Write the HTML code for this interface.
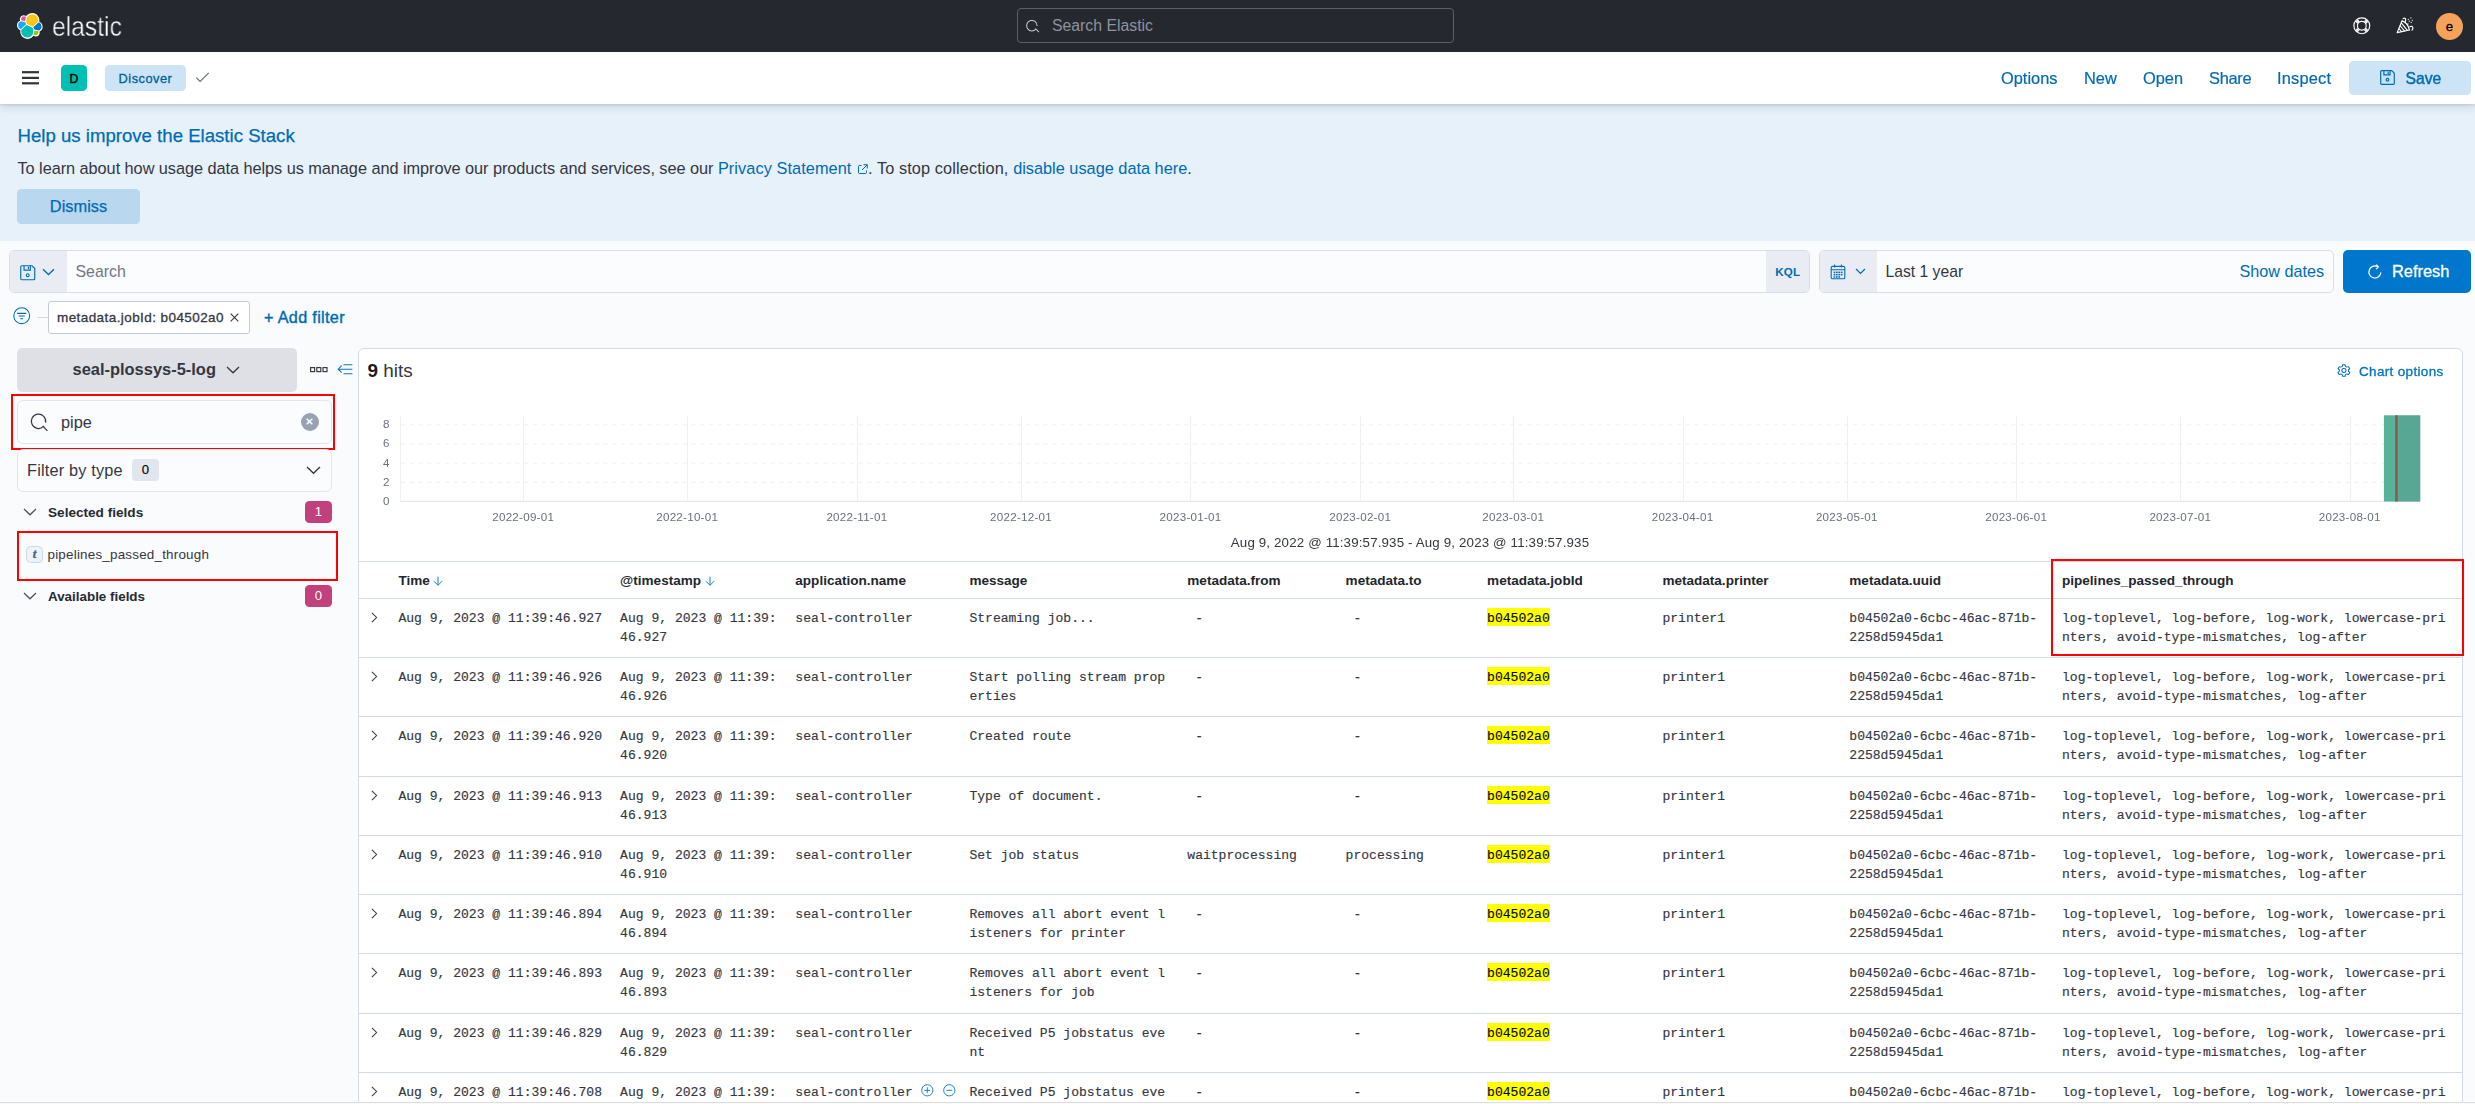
<!DOCTYPE html>
<html lang="en">
<head>
<meta charset="utf-8">
<title>Discover - Elastic</title>
<style>
*{box-sizing:border-box;margin:0;padding:0}
html,body{width:2475px;height:1104px;overflow:hidden;background:#fafbfd;font-family:"Liberation Sans",sans-serif;color:#343741}
.a{position:absolute;white-space:nowrap}
.mono{font-family:"Liberation Mono",monospace}
.blue{color:#006bb4}
svg{display:block;overflow:visible}
/* header */
#h1{left:0;top:0;width:2475px;height:52px;background:#25282f}
#h2{z-index:5;left:0;top:52px;width:2475px;height:52px;background:#fff;box-shadow:0 1px 2px rgba(70,80,100,.15),0 3px 9px rgba(80,95,120,.2)}
#banner{left:0;top:104px;width:2475px;height:137px;background:#e6f1fa}
.lnk{font-size:16.4px;color:#006bb4;top:17px;line-height:18px;-webkit-text-stroke:.2px #006bb4}
/* table */
.th{font-size:13.55px;font-weight:bold;color:#23262d;top:573px;line-height:16px}
.row{left:359px;width:2103px;height:60px;border-top:1px solid #d3dae6}
.c{position:absolute;top:10px;-webkit-text-stroke:.15px #343741;font-family:"Liberation Mono",monospace;font-size:13.05px;line-height:19px;color:#343741;white-space:pre}
.xl{width:100px;text-align:center;top:509px;font-size:11.6px;letter-spacing:.25px;line-height:16px;color:#69707d}
.yl{left:340px;width:49.5px;text-align:right;font-size:11.6px;line-height:16px;color:#69707d}
.hl{background:#ffff00;color:#000;padding:3px 0 0}
</style>
</head>
<body>
<!-- HEADER DARK -->
<div class="a" id="h1">
<svg class="a" style="left:16.8px;top:12.6px" width="25.6" height="25.6" viewBox="0 0 32 32">
<path fill="#FFF" d="M32 16.77a6.334 6.334 0 00-1.14-3.63 6.34 6.34 0 00-3.044-2.35 9.05 9.05 0 00.164-1.72 9.044 9.044 0 00-1.748-5.35A9.04 9.04 0 0021.62.42a9.046 9.046 0 00-5.624.1 9.04 9.04 0 00-4.5 3.37 4.89 4.89 0 00-5.96-.06 4.89 4.89 0 00-1.76 2.58 4.89 4.89 0 00.12 3.13 6.43 6.43 0 00-3.05 2.36A6.43 6.43 0 000 15.56a6.36 6.36 0 001.14 3.65 6.36 6.36 0 003.05 2.35 9.05 9.05 0 001.6 7.07 9.05 9.05 0 004.6 3.3 9.05 9.05 0 005.66-.05 9.05 9.05 0 004.53-3.39 4.85 4.85 0 002.98 1.03 4.88 4.88 0 003.96-2.03 4.88 4.88 0 00.63-4.4 6.43 6.43 0 003.05-2.36A6.43 6.43 0 0032 16.77"/>
<path fill="#FEC514" d="M12.58 13.787l7.002 3.211 7.066-6.213a7.85 7.85 0 00.152-1.557c0-4.287-3.472-7.76-7.76-7.76a7.76 7.76 0 00-6.43 3.4l-1.18 6.1 1.15 2.82z"/>
<path fill="#00BFB3" d="M5.333 21.215a7.93 7.93 0 00-.15 1.58 7.78 7.78 0 007.794 7.77 7.77 7.77 0 006.42-3.39l1.17-6.09-1.56-2.98-7.03-3.2-6.65 6.31z"/>
<path fill="#F04E98" d="M5.288 9.067l4.8 1.137 1.05-5.47a3.79 3.79 0 00-2.28-.77 3.8 3.8 0 00-3.57 5.1"/>
<path fill="#1BA9F5" d="M4.872 10.214A5.38 5.38 0 001.3 15.28a5.35 5.35 0 003.46 5.02l6.73-6.1-1.24-2.64-5.38-1.35z"/>
<path fill="#93C90E" d="M20.873 27.177a3.77 3.77 0 002.28.78 3.8 3.8 0 003.58-5.1l-4.8-1.12-1.06 5.44z"/>
<path fill="#07C" d="M21.848 20.563l5.28 1.24a5.38 5.38 0 003.58-5.07 5.36 5.36 0 00-3.47-5.02l-6.9 6.05 1.51 2.8z"/>
</svg>
<div class="a" id="wordmark" style="left:52.3px;top:10.6px;font-size:27.4px;line-height:32px;color:#fff;transform-origin:0 0;transform:scaleX(.9);will-change:transform;-webkit-text-stroke:.4px #25282f">elastic</div>
<div class="a" style="left:1017px;top:8px;width:437px;height:35px;border:1px solid #5b5f6a;border-radius:4px"></div>
<svg class="a" style="left:1025px;top:17.5px" width="15" height="15" viewBox="0 0 16 16"><path fill="none" stroke="#c5c9d0" stroke-width="1.1" d="M11.6 11.8A5.6 5.6 0 1 1 12.9 8.6M11.2 11.2l3.6 3.8"/></svg>
<div class="a" style="left:1052px;top:16px;font-size:15.8px;line-height:20px;color:#8e939e">Search Elastic</div>
<svg class="a" id="ic-help" style="left:2352.700px;top:16.700px" width="17.600" height="17.600" viewBox="0 0 18 18"><g fill="none" stroke="#fff"><circle cx="9" cy="9" r="8.100" stroke-width="1.2"/><circle cx="9" cy="9" r="4.500" stroke-width="1.2"/><path d="M3.600 3.600l2 2M14.400 3.600l-2 2M3.600 14.400l2-2M14.400 14.400l-2-2" stroke-width="3.400" opacity=".92"/></g></svg>
<svg class="a" id="ic-cheer" style="left:2396px;top:16px" width="18" height="18" viewBox="0 0 18 18"><g fill="none" stroke="#fff" stroke-width="1.15" stroke-linejoin="round" stroke-linecap="round"><path d="M6 4.900L1.200 16.600l12.200-2.600"/><path d="M6 4.900c3.400 1.100 6.400 4.700 7.400 9.100"/><path d="M4.100 9.600l4.400 5.400M2.900 12.500l2.700 3.200M5.300 6.900l6 7.500"/><path d="M7.100 2.600c1.200-.9 2.700-.2 2.600 1.200-.1.900-.7 1.500-.3 2.500"/><path d="M13.700 10.800c1.300-.9 3-.5 3.200 1 .1 1-.3 1.700-.9 2.300"/></g><g fill="#fff"><circle cx="14.900" cy="1.900" r=".6"/><circle cx="16.300" cy="4.300" r=".6"/><circle cx="15.200" cy="6.400" r=".6"/><circle cx="13.300" cy="5.200" r=".65"/><circle cx="12.300" cy="3.300" r=".65"/><circle cx="12" cy="7.900" r=".6"/></g></svg>
<div class="a" style="left:2436px;top:12.500px;width:27px;height:27px;border-radius:50%;background:#f5a35c;color:#000;font-size:13.200px;line-height:27.500px;text-align:center;-webkit-text-stroke:.3px #000">e</div>
</div>
<!-- HEADER WHITE -->
<div class="a" id="h2">
<svg class="a" style="left:22px;top:19px" width="17" height="14" viewBox="0 0 17 14"><g fill="#30333c"><rect x="0" y=".1" width="17" height="2.2"/><rect x="0" y="5.800" width="17" height="2.200"/><rect x="0" y="11.200" width="17" height="2.200"/></g></svg>
<div class="a" style="left:61px;top:13px;width:26px;height:26px;border-radius:4.5px;background:#00bfb3;color:#000;font-size:12.2px;-webkit-text-stroke:.45px #000;line-height:29.500px;text-align:center">D</div>
<div class="a" style="left:105px;top:13px;width:81px;height:26px;border-radius:4.5px;background:#cce4f5;color:#00609f;font-size:12.8px;letter-spacing:.5px;line-height:27.500px;text-align:center;-webkit-text-stroke:.3px #00609f">Discover</div>
<svg class="a" style="left:195px;top:19px" width="15" height="13" viewBox="0 0 15 13"><path fill="none" stroke="#69707d" stroke-width="1.2" d="M1.2 6.6l3.9 3.9L13.8 1.8"/></svg>
<div class="a lnk" style="left:2001px">Options</div>
<div class="a lnk" style="left:2084px">New</div>
<div class="a lnk" style="left:2143px">Open</div>
<div class="a lnk" style="left:2209px;letter-spacing:-.3px">Share</div>
<div class="a lnk" style="left:2277px;letter-spacing:.2px">Inspect</div>
<div class="a" style="left:2349px;top:9px;width:122px;height:34px;border-radius:4.5px;background:#cce4f5"></div>
<svg class="a" id="ic-save" style="left:2379px;top:17px" width="17" height="17" viewBox="0 0 16 16"><g fill="none" stroke="#006bb4" stroke-width="1.1"><path d="M1.6 2.6a1 1 0 011-1h9.3l2.5 2.5v9.3a1 1 0 01-1 1H2.6a1 1 0 01-1-1z"/><path d="M4.6 1.6v4h5.8v-4M8.6 2.6v2"/><circle cx="8" cy="10.2" r="1.3"/></g></svg>
<div class="a lnk" style="left:2405.400px;top:18px;font-size:15.800px;-webkit-text-stroke:.4px #006bb4">Save</div>
</div>
<!-- BANNER -->
<div class="a" id="banner">
<div class="a" style="left:17.5px;top:21px;font-size:18.63px;line-height:22px;color:#006bb4;-webkit-text-stroke:.25px #006bb4">Help us improve the Elastic Stack</div>
<div class="a" style="left:17.5px;top:54px;font-size:16.32px;line-height:20px;color:#343741"><span style="letter-spacing:-.055px">To learn about how usage data helps us manage and improve our products and services, see our </span><span class="blue" style="letter-spacing:.07px">Privacy Statement</span><svg style="display:inline-block;vertical-align:-1px;margin:0 0 0 5.500px" width="11" height="11" viewBox="0 0 11 11"><path fill="none" stroke="#006bb4" stroke-width="1" d="M4.5 1.5h-2a1 1 0 00-1 1v6a1 1 0 001 1h6a1 1 0 001-1v-2M6.5 .7h3.8v3.8M10.2 .8L5 6"/></svg><span style="letter-spacing:.1px">. To stop collection, </span><span class="blue">disable usage data here</span>.</div>
<div class="a" style="left:17px;top:85px;width:123px;height:35px;border-radius:4.5px;background:#b9d8f0;color:#006bb4;font-size:16.4px;line-height:35px;text-align:center;-webkit-text-stroke:.25px #006bb4">Dismiss</div>
</div>
<!-- QUERY BAR -->
<div class="a" id="qb" style="left:9px;top:250px;width:1801px;height:43px;border:1px solid #d9dde6;border-radius:5px;background:#fbfcfd;overflow:hidden">
<div class="a" style="left:0;top:0;width:57px;height:41px;background:#e9edf3"></div>
<svg class="a" style="left:9.300px;top:12.600px" width="17.500" height="17.500" viewBox="0 0 16 16"><g fill="none" stroke="#006bb4" stroke-width="1.05"><path d="M1.6 2.6a1 1 0 011-1h9.3l2.5 2.5v9.3a1 1 0 01-1 1H2.6a1 1 0 01-1-1z"/><path d="M4.6 1.6v4h5.8v-4M8.6 2.6v2"/><circle cx="8" cy="10.2" r="1.3"/></g></svg>
<svg class="a" style="left:32px;top:17px" width="13" height="8" viewBox="0 0 13 8"><path fill="none" stroke="#006bb4" stroke-width="1.3" d="M1 1.2l5.5 5.3L12 1.2"/></svg>
<div class="a" style="left:65.500px;top:11px;font-size:15.900px;line-height:20px;color:#717885">Search</div>
<div class="a" style="left:1756px;top:0;width:45px;height:41px;background:#e9edf3;color:#006bb4;font-size:11.6px;font-weight:bold;line-height:42px;text-align:center;letter-spacing:.2px;text-indent:-1.5px">KQL</div>
</div>
<div class="a" id="dp" style="left:1819px;top:250px;width:515px;height:43px;border:1px solid #d9dde6;border-radius:5px;background:#fbfcfd;overflow:hidden">
<div class="a" style="left:0;top:0;width:57px;height:41px;background:#e9edf3"></div>
<svg class="a" style="left:10px;top:12.5px" width="16" height="16" viewBox="0 0 16 16"><g fill="none" stroke="#006bb4" stroke-width="1.1"><rect x="1.2" y="2.4" width="13.6" height="12.4" rx="1.4"/><path d="M1.2 5.8h13.6M4.6 .6v3M11.4 .6v3"/></g><g fill="#006bb4"><rect x="3.6" y="7.6" width="1.7" height="1.5"/><rect x="6" y="7.6" width="1.7" height="1.5"/><rect x="8.4" y="7.6" width="1.7" height="1.5"/><rect x="10.8" y="7.6" width="1.7" height="1.5"/><rect x="3.6" y="9.9" width="1.7" height="1.5"/><rect x="6" y="9.9" width="1.7" height="1.5"/><rect x="8.4" y="9.9" width="1.7" height="1.5"/><rect x="10.8" y="9.9" width="1.7" height="1.5"/><rect x="3.6" y="12.2" width="1.7" height="1.5"/><rect x="6" y="12.2" width="1.7" height="1.5"/><rect x="8.4" y="12.2" width="1.7" height="1.5"/></g></svg>
<svg class="a" style="left:35px;top:17px" width="11" height="7" viewBox="0 0 11 7"><path fill="none" stroke="#006bb4" stroke-width="1.2" d="M1 1l4.5 4.5L10 1"/></svg>
<div class="a" style="left:65.5px;top:11px;font-size:15.7px;line-height:20px;color:#343741">Last 1 year</div>
<div class="a" style="right:9px;top:10px;font-size:16.2px;line-height:20px;color:#006bb4">Show dates</div>
</div>
<div class="a" id="refresh" style="left:2343px;top:250px;width:128px;height:43px;border-radius:5px;background:#0077cc"></div>
<svg class="a" style="left:2367px;top:263.5px" width="16" height="16" viewBox="0 0 16 16"><path fill="none" stroke="#fff" stroke-width="1.2" d="M13.9 8.4A6 6 0 1 1 10.6 2.6M9.2 .8l2.2 2-2.2 2.4"/></svg>
<div class="a" style="left:2392px;top:261px;font-size:16.4px;line-height:20px;color:#fff;-webkit-text-stroke:.3px #fff">Refresh</div>
<!-- FILTER ROW -->
<svg class="a" id="ic-filter" style="left:12.700px;top:306.700px" width="17.400" height="17.400" viewBox="0 0 18 18"><g fill="none" stroke="#006bb4" stroke-width="1.1"><circle cx="9" cy="9" r="8.2"/><path d="M4.2 6.6h9.6M5.8 9.4h6.4M7.6 12.2h2.8"/></g></svg>
<div class="a" style="left:37px;top:317px;width:12px;height:1px;background:#d3dae6"></div>
<div class="a" style="left:48px;top:301px;width:201.5px;height:33px;border:1px solid #c5cbd6;border-radius:3px;background:#fff"></div>
<div class="a" style="left:57px;top:309px;font-size:13.5px;letter-spacing:.42px;line-height:17px;color:#343741;-webkit-text-stroke:.3px #343741">metadata.jobId: b04502a0</div>
<svg class="a" style="left:230px;top:313px" width="9" height="9" viewBox="0 0 9 9"><path fill="none" stroke="#343741" stroke-width="1.1" d="M.7.7l7.6 7.6M8.3.7L.7 8.3"/></svg>
<div class="a" style="left:264px;top:307px;font-size:16.2px;letter-spacing:.33px;line-height:20px;color:#006bb4;-webkit-text-stroke:.4px #006bb4">+ Add filter</div>

<!-- SIDEBAR -->
<div class="a" style="left:17px;top:348px;width:280px;height:43.5px;border-radius:5px;background:#dee0e5"></div>
<div class="a" style="left:72.5px;top:359px;font-size:16.45px;font-weight:bold;line-height:20px;color:#343741">seal-plossys-5-log</div>
<svg class="a" style="left:226px;top:365.5px" width="14" height="8" viewBox="0 0 14 8"><path fill="none" stroke="#343741" stroke-width="1.3" d="M1 1l6 5.8L13 1"/></svg>
<svg class="a" style="left:309.900px;top:367.100px" width="18" height="6" viewBox="0 0 18 6"><g fill="none" stroke="#343741" stroke-width="1.15"><rect x=".6" y=".6" width="4" height="4"/><rect x="6.800" y=".6" width="4" height="4"/><rect x="13" y=".6" width="4" height="4"/></g></svg>
<svg class="a" style="left:336.800px;top:363.800px" width="16" height="11" viewBox="0 0 16 11"><path fill="none" stroke="#0a74c2" stroke-width="1.05" d="M6.500 .7h8.900M1.200 5.200h14.200M6.500 9.700h8.900M4.700 1.700L1.200 5.200l3.500 3.500"/></svg>
<div class="a" style="left:17px;top:400px;width:315px;height:44px;border:1px solid #e1e5ee;border-radius:6px;background:#fbfcfd"></div>
<svg class="a" style="left:30px;top:413px" width="19" height="19" viewBox="0 0 19 19"><path fill="none" stroke="#343741" stroke-width="1.2" d="M13.4 13.6A7.2 7.2 0 1 1 15.6 9.6M12.8 12.8l4.6 5"/></svg>
<div class="a" style="left:61px;top:412px;font-size:16.3px;line-height:20px;color:#343741">pipe</div>
<div class="a" style="left:300.5px;top:412.5px;width:18.5px;height:18.5px;border-radius:50%;background:#98a2b3"></div>
<svg class="a" style="left:306.2px;top:418.2px" width="7" height="7" viewBox="0 0 7 7"><path fill="none" stroke="#fff" stroke-width="1.5" d="M.7.7l5.6 5.6M6.3.7L.7 6.3"/></svg>
<div class="a" style="left:11px;top:394px;width:324px;height:56px;border:2px solid #ff0000"></div>
<div class="a" style="left:17px;top:449px;width:315px;height:42.5px;border:1px solid #e1e5ee;border-radius:6px;background:#fbfcfd"></div>
<div class="a" style="left:27px;top:460px;font-size:16.3px;letter-spacing:.18px;line-height:20px;color:#343741">Filter by type</div>
<div class="a" style="left:132px;top:459px;width:27px;height:22px;border-radius:4px;background:#e0e5ee;color:#000;font-size:13.2px;line-height:22px;text-align:center;-webkit-text-stroke:.12px #000">0</div>
<svg class="a" style="left:306px;top:465.5px" width="15" height="9" viewBox="0 0 15 9"><path fill="none" stroke="#343741" stroke-width="1.3" d="M1 1l6.5 6.3L14 1"/></svg>
<svg class="a" style="left:23.300px;top:508px" width="14" height="8" viewBox="0 0 14 8"><path fill="none" stroke="#4a4f59" stroke-width="1.2" d="M1 1l6 5.8L13 1"/></svg>
<div class="a" style="left:48px;top:503.5px;font-size:13.6px;font-weight:bold;line-height:17px;color:#272a31">Selected fields</div>
<div class="a" style="left:305px;top:501px;width:27px;height:22px;border-radius:4.5px;background:#c2407b;color:#fff;font-size:13.2px;line-height:21.5px;text-align:center">1</div>
<div class="a" style="left:26px;top:546px;width:17px;height:17px;border:1px solid #c9d9ea;border-radius:4.5px;background:#eef3f9"></div>
<div class="a" style="left:26px;top:546px;width:17px;height:17px;font-family:'Liberation Serif',serif;font-style:italic;font-weight:bold;font-size:13px;line-height:16px;text-align:center;color:#42668d;-webkit-text-stroke:.3px #42668d">t</div>
<div class="a" style="left:47.5px;top:546px;font-size:13.4px;line-height:17px;color:#343741;letter-spacing:.22px">pipelines_passed_through</div>
<div class="a" style="left:17px;top:531px;width:321px;height:50px;border:2px solid #ff0000"></div>
<svg class="a" style="left:23.300px;top:592px" width="14" height="8" viewBox="0 0 14 8"><path fill="none" stroke="#4a4f59" stroke-width="1.2" d="M1 1l6 5.8L13 1"/></svg>
<div class="a" style="left:48px;top:587.5px;font-size:13.4px;font-weight:bold;line-height:17px;color:#272a31">Available fields</div>
<div class="a" style="left:305px;top:585px;width:27px;height:22px;border-radius:4.5px;background:#c2407b;color:#fff;font-size:13.2px;line-height:21.5px;text-align:center">0</div>
<!-- MAIN PANEL -->
<div class="a" id="panel" style="left:358px;top:348px;width:2105px;height:770px;border:1px solid #d3dae6;border-radius:6px;background:#fff"></div>
<div class="a" style="left:367.5px;top:359px;font-size:18.9px;line-height:23px;color:#343741"><b style="color:#1a1c21">9</b> hits</div>
<!--CHART-->
<svg class="a" id="chart" style="left:0;top:0" width="2475" height="560" viewBox="0 0 2475 560"><g stroke="#eef0f4" stroke-width="1" fill="none"><path d="M400.5 416V501"/><path d="M523.5 416V501"/><path d="M687.5 416V501"/><path d="M857.5 416V501"/><path d="M1021.5 416V501"/><path d="M1190.5 416V501"/><path d="M1360.5 416V501"/><path d="M1513.5 416V501"/><path d="M1683.5 416V501"/><path d="M1847.5 416V501"/><path d="M2016.5 416V501"/><path d="M2180.5 416V501"/><path d="M2350.5 416V501"/></g><g stroke="#eeeff4" stroke-width="1.1" stroke-dasharray="4.1 4.7" fill="none"><path d="M401 424.8H2420"/><path d="M401 444.0H2420"/><path d="M401 463.2H2420"/><path d="M401 482.4H2420"/></g><path d="M400 501.4H2420" stroke="#e4e7ee" stroke-width="1.2" fill="none"/><rect x="2383.9" y="415.3" width="36.4" height="86.2" fill="#54b399"/><rect x="2396.4" y="415.3" width="23.9" height="86.2" fill="#6a7a86" opacity=".22"/><rect x="2395.1" y="415.3" width="2.6" height="86.2" fill="#8e5a4e"/></svg>
<div class="a xl" style="left:473.2px">2022-09-01</div>
<div class="a xl" style="left:637.2px">2022-10-01</div>
<div class="a xl" style="left:806.9px">2022-11-01</div>
<div class="a xl" style="left:971.0px">2022-12-01</div>
<div class="a xl" style="left:1140.5px">2023-01-01</div>
<div class="a xl" style="left:1310.2px">2023-02-01</div>
<div class="a xl" style="left:1463.2px">2023-03-01</div>
<div class="a xl" style="left:1632.6px">2023-04-01</div>
<div class="a xl" style="left:1796.8px">2023-05-01</div>
<div class="a xl" style="left:1966.2px">2023-06-01</div>
<div class="a xl" style="left:2130.3px">2023-07-01</div>
<div class="a xl" style="left:2299.7px">2023-08-01</div>
<div class="a yl" style="top:416.3px">8</div>
<div class="a yl" style="top:435.0px">6</div>
<div class="a yl" style="top:454.7px">4</div>
<div class="a yl" style="top:473.9px">2</div>
<div class="a yl" style="top:493.1px">0</div>
<div class="a" style="left:1110px;width:600px;text-align:center;top:534px;font-size:13.3px;letter-spacing:.16px;line-height:17px;color:#343741">Aug 9, 2022 @ 11:39:57.935 - Aug 9, 2023 @ 11:39:57.935</div>
<svg class="a" style="left:2336.700px;top:363.900px" width="13.800" height="13.100" viewBox="0 0 14 14" preserveAspectRatio="none"><g fill="none" stroke="#0071c2" stroke-width="1.05" stroke-linejoin="round"><path d="M5.34 2.60L5.75 0.83L8.25 0.83L8.66 2.60L9.98 3.37L11.72 2.83L12.97 5.00L11.64 6.23L11.64 7.77L12.97 9.00L11.72 11.17L9.98 10.63L8.66 11.40L8.25 13.17L5.75 13.17L5.34 11.40L4.02 10.63L2.28 11.17L1.03 9.00L2.36 7.77L2.36 6.23L1.03 5.00L2.28 2.83L4.02 3.37Z"/><circle cx="7" cy="7" r="2.1"/></g></svg>
<div class="a" style="left:2359px;top:362.5px;font-size:13.5px;letter-spacing:.33px;line-height:17px;color:#0071c2;-webkit-text-stroke:.3px #0071c2">Chart options</div>
<!--/CHART-->
<!--TABLE-->
<div class="a" style="left:359px;top:561px;width:2103px;height:1px;background:#d3dae6"></div>
<div class="a th" style="left:398.4px">Time<svg style="display:inline-block;vertical-align:-1.300px;margin-left:3.500px" width="10" height="10" viewBox="0 0 10 10"><path fill="none" stroke="#1a80cc" stroke-width="1" d="M5 .6v8.600M.9 5.200l4.100 4.100 4.100-4.100"/></svg></div>
<div class="a th" style="left:620.1px">@timestamp<svg style="display:inline-block;vertical-align:-1.300px;margin-left:3.500px" width="10" height="10" viewBox="0 0 10 10"><path fill="none" stroke="#1a80cc" stroke-width="1" d="M5 .6v8.600M.9 5.200l4.100 4.100 4.100-4.100"/></svg></div>
<div class="a th" style="left:795.3px">application.name</div>
<div class="a th" style="left:969.4px">message</div>
<div class="a th" style="left:1187.3px">metadata.from</div>
<div class="a th" style="left:1345.6px">metadata.to</div>
<div class="a th" style="left:1487.1px">metadata.jobId</div>
<div class="a th" style="left:1662.4px">metadata.printer</div>
<div class="a th" style="left:1849.3px">metadata.uuid</div>
<div class="a th" style="left:2062.0px">pipelines_passed_through</div>
<div class="a row" style="top:598.0px"><svg class="a" style="left:12.3px;top:13.3px" width="7" height="11" viewBox="0 0 7 11"><path fill="none" stroke="#343741" stroke-width="1.05" d="M.9 .8l4.700 4.700-4.700 4.700"/></svg><div class="c" style="left:39.4px">Aug 9, 2023 @ 11:39:46.927</div><div class="c" style="left:261.1px">Aug 9, 2023 @ 11:39:
46.927</div><div class="c" style="left:436.3px">seal-controller</div><div class="c" style="left:610.4px">Streaming job...</div><div class="c" style="left:828.3px"> - </div><div class="c" style="left:986.6px"> - </div><div class="c" style="left:1128.1px"><span class="hl">b04502a0</span></div><div class="c" style="left:1303.4px">printer1</div><div class="c" style="left:1490.3px">b04502a0-6cbc-46ac-871b-
2258d5945da1</div><div class="c" style="left:1703.0px">log-toplevel, log-before, log-work, lowercase-pri
nters, avoid-type-mismatches, log-after</div></div>
<div class="a row" style="top:657.0px"><svg class="a" style="left:12.3px;top:13.3px" width="7" height="11" viewBox="0 0 7 11"><path fill="none" stroke="#343741" stroke-width="1.05" d="M.9 .8l4.700 4.700-4.700 4.700"/></svg><div class="c" style="left:39.4px">Aug 9, 2023 @ 11:39:46.926</div><div class="c" style="left:261.1px">Aug 9, 2023 @ 11:39:
46.926</div><div class="c" style="left:436.3px">seal-controller</div><div class="c" style="left:610.4px">Start polling stream prop
erties</div><div class="c" style="left:828.3px"> - </div><div class="c" style="left:986.6px"> - </div><div class="c" style="left:1128.1px"><span class="hl">b04502a0</span></div><div class="c" style="left:1303.4px">printer1</div><div class="c" style="left:1490.3px">b04502a0-6cbc-46ac-871b-
2258d5945da1</div><div class="c" style="left:1703.0px">log-toplevel, log-before, log-work, lowercase-pri
nters, avoid-type-mismatches, log-after</div></div>
<div class="a row" style="top:716.0px"><svg class="a" style="left:12.3px;top:13.3px" width="7" height="11" viewBox="0 0 7 11"><path fill="none" stroke="#343741" stroke-width="1.05" d="M.9 .8l4.700 4.700-4.700 4.700"/></svg><div class="c" style="left:39.4px">Aug 9, 2023 @ 11:39:46.920</div><div class="c" style="left:261.1px">Aug 9, 2023 @ 11:39:
46.920</div><div class="c" style="left:436.3px">seal-controller</div><div class="c" style="left:610.4px">Created route</div><div class="c" style="left:828.3px"> - </div><div class="c" style="left:986.6px"> - </div><div class="c" style="left:1128.1px"><span class="hl">b04502a0</span></div><div class="c" style="left:1303.4px">printer1</div><div class="c" style="left:1490.3px">b04502a0-6cbc-46ac-871b-
2258d5945da1</div><div class="c" style="left:1703.0px">log-toplevel, log-before, log-work, lowercase-pri
nters, avoid-type-mismatches, log-after</div></div>
<div class="a row" style="top:776.0px"><svg class="a" style="left:12.3px;top:13.3px" width="7" height="11" viewBox="0 0 7 11"><path fill="none" stroke="#343741" stroke-width="1.05" d="M.9 .8l4.700 4.700-4.700 4.700"/></svg><div class="c" style="left:39.4px">Aug 9, 2023 @ 11:39:46.913</div><div class="c" style="left:261.1px">Aug 9, 2023 @ 11:39:
46.913</div><div class="c" style="left:436.3px">seal-controller</div><div class="c" style="left:610.4px">Type of document.</div><div class="c" style="left:828.3px"> - </div><div class="c" style="left:986.6px"> - </div><div class="c" style="left:1128.1px"><span class="hl">b04502a0</span></div><div class="c" style="left:1303.4px">printer1</div><div class="c" style="left:1490.3px">b04502a0-6cbc-46ac-871b-
2258d5945da1</div><div class="c" style="left:1703.0px">log-toplevel, log-before, log-work, lowercase-pri
nters, avoid-type-mismatches, log-after</div></div>
<div class="a row" style="top:835.0px"><svg class="a" style="left:12.3px;top:13.3px" width="7" height="11" viewBox="0 0 7 11"><path fill="none" stroke="#343741" stroke-width="1.05" d="M.9 .8l4.700 4.700-4.700 4.700"/></svg><div class="c" style="left:39.4px">Aug 9, 2023 @ 11:39:46.910</div><div class="c" style="left:261.1px">Aug 9, 2023 @ 11:39:
46.910</div><div class="c" style="left:436.3px">seal-controller</div><div class="c" style="left:610.4px">Set job status</div><div class="c" style="left:828.3px">waitprocessing</div><div class="c" style="left:986.6px">processing</div><div class="c" style="left:1128.1px"><span class="hl">b04502a0</span></div><div class="c" style="left:1303.4px">printer1</div><div class="c" style="left:1490.3px">b04502a0-6cbc-46ac-871b-
2258d5945da1</div><div class="c" style="left:1703.0px">log-toplevel, log-before, log-work, lowercase-pri
nters, avoid-type-mismatches, log-after</div></div>
<div class="a row" style="top:894.0px"><svg class="a" style="left:12.3px;top:13.3px" width="7" height="11" viewBox="0 0 7 11"><path fill="none" stroke="#343741" stroke-width="1.05" d="M.9 .8l4.700 4.700-4.700 4.700"/></svg><div class="c" style="left:39.4px">Aug 9, 2023 @ 11:39:46.894</div><div class="c" style="left:261.1px">Aug 9, 2023 @ 11:39:
46.894</div><div class="c" style="left:436.3px">seal-controller</div><div class="c" style="left:610.4px">Removes all abort event l
isteners for printer</div><div class="c" style="left:828.3px"> - </div><div class="c" style="left:986.6px"> - </div><div class="c" style="left:1128.1px"><span class="hl">b04502a0</span></div><div class="c" style="left:1303.4px">printer1</div><div class="c" style="left:1490.3px">b04502a0-6cbc-46ac-871b-
2258d5945da1</div><div class="c" style="left:1703.0px">log-toplevel, log-before, log-work, lowercase-pri
nters, avoid-type-mismatches, log-after</div></div>
<div class="a row" style="top:953.0px"><svg class="a" style="left:12.3px;top:13.3px" width="7" height="11" viewBox="0 0 7 11"><path fill="none" stroke="#343741" stroke-width="1.05" d="M.9 .8l4.700 4.700-4.700 4.700"/></svg><div class="c" style="left:39.4px">Aug 9, 2023 @ 11:39:46.893</div><div class="c" style="left:261.1px">Aug 9, 2023 @ 11:39:
46.893</div><div class="c" style="left:436.3px">seal-controller</div><div class="c" style="left:610.4px">Removes all abort event l
isteners for job</div><div class="c" style="left:828.3px"> - </div><div class="c" style="left:986.6px"> - </div><div class="c" style="left:1128.1px"><span class="hl">b04502a0</span></div><div class="c" style="left:1303.4px">printer1</div><div class="c" style="left:1490.3px">b04502a0-6cbc-46ac-871b-
2258d5945da1</div><div class="c" style="left:1703.0px">log-toplevel, log-before, log-work, lowercase-pri
nters, avoid-type-mismatches, log-after</div></div>
<div class="a row" style="top:1013.0px"><svg class="a" style="left:12.3px;top:13.3px" width="7" height="11" viewBox="0 0 7 11"><path fill="none" stroke="#343741" stroke-width="1.05" d="M.9 .8l4.700 4.700-4.700 4.700"/></svg><div class="c" style="left:39.4px">Aug 9, 2023 @ 11:39:46.829</div><div class="c" style="left:261.1px">Aug 9, 2023 @ 11:39:
46.829</div><div class="c" style="left:436.3px">seal-controller</div><div class="c" style="left:610.4px">Received P5 jobstatus eve
nt</div><div class="c" style="left:828.3px"> - </div><div class="c" style="left:986.6px"> - </div><div class="c" style="left:1128.1px"><span class="hl">b04502a0</span></div><div class="c" style="left:1303.4px">printer1</div><div class="c" style="left:1490.3px">b04502a0-6cbc-46ac-871b-
2258d5945da1</div><div class="c" style="left:1703.0px">log-toplevel, log-before, log-work, lowercase-pri
nters, avoid-type-mismatches, log-after</div></div>
<div class="a row" style="top:1072.0px"><svg class="a" style="left:12.3px;top:13.3px" width="7" height="11" viewBox="0 0 7 11"><path fill="none" stroke="#343741" stroke-width="1.05" d="M.9 .8l4.700 4.700-4.700 4.700"/></svg><div class="c" style="left:39.4px">Aug 9, 2023 @ 11:39:46.708</div><div class="c" style="left:261.1px">Aug 9, 2023 @ 11:39:
46.708</div><div class="c" style="left:436.3px">seal-controller</div><div class="c" style="left:610.4px">Received P5 jobstatus eve
nt</div><div class="c" style="left:828.3px"> - </div><div class="c" style="left:986.6px"> - </div><div class="c" style="left:1128.1px"><span class="hl">b04502a0</span></div><div class="c" style="left:1303.4px">printer1</div><div class="c" style="left:1490.3px">b04502a0-6cbc-46ac-871b-
2258d5945da1</div><div class="c" style="left:1703.0px">log-toplevel, log-before, log-work, lowercase-pri
nters, avoid-type-mismatches, log-after</div><svg class="a" style="left:561.700px;top:11.100px" width="12.600" height="12.600" viewBox="0 0 13 13"><g fill="none" stroke="#1a80cc" stroke-width="1"><circle cx="6.5" cy="6.5" r="5.800"/><path d="M3.500 6.500h6M6.500 3.500v6"/></g></svg><svg class="a" style="left:583.900px;top:11.100px" width="12.600" height="12.600" viewBox="0 0 13 13"><g fill="none" stroke="#1a80cc" stroke-width="1"><circle cx="6.5" cy="6.5" r="5.800"/><path d="M3.500 6.500h6"/></g></svg></div>
<div class="a" style="left:2051px;top:559px;width:413px;height:97px;border:2px solid #ff0000"></div>
<!--/TABLE-->
<div class="a" style="left:0;top:1102px;width:2475px;height:1px;background:#dcdcdc"></div><div class="a" style="left:0;top:1103px;width:2475px;height:1px;background:#fafafa"></div>
</body>
</html>
